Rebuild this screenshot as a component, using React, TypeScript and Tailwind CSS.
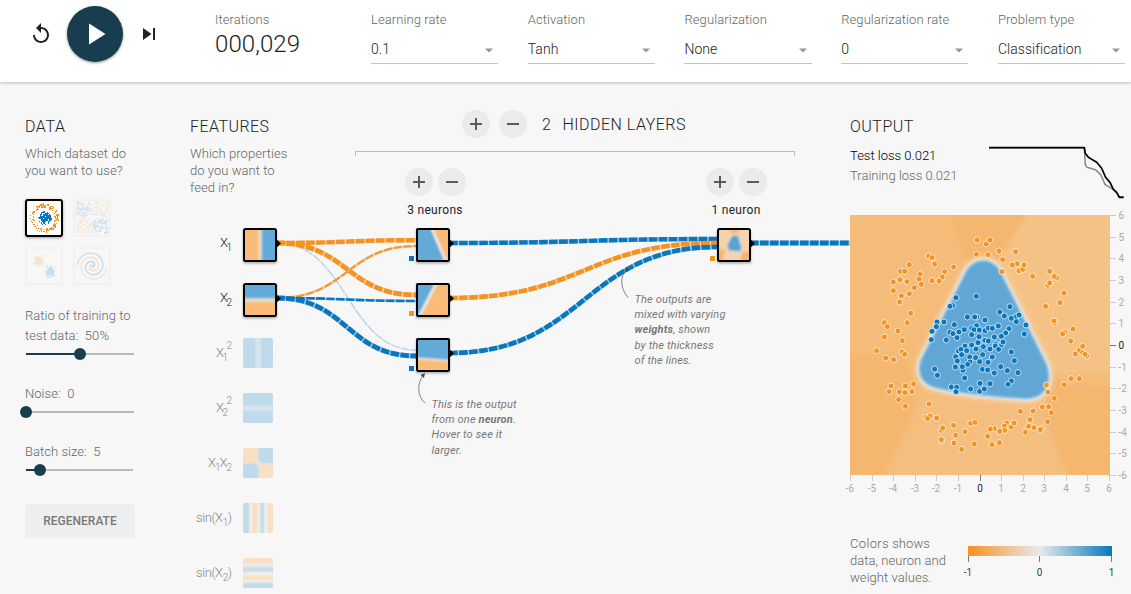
import React from "react";

const BLUE = "#0877bd";
const ORANGE = "#f59322";

/* ---------- header ---------- */

function Select({ label, value }: { label: string; value: string }) {
  return (
    <div className="flex flex-col">
      <span className="text-[13px] leading-[17px] font-light tracking-[0.08px] whitespace-nowrap text-[#666]">{label}</span>
      <div className="mt-[8px] flex h-[28px] items-center justify-between border-b border-[#c4c4c4] pr-[5px]">
        <span className="text-[14px] font-light tracking-[0.05px] text-[#222]">{value}</span>
        <svg width="8" height="5" viewBox="0 0 8 5" className="mt-px">
          <path d="M0 0.5h8L4 4.5z" fill="#999" />
        </svg>
      </div>
    </div>
  );
}

function Header() {
  return (
    <header className="relative z-10 flex h-[82px] items-start bg-white shadow-[0_1px_3px_rgba(0,0,0,0.24)]">
      <div className="flex h-[68px] items-center pl-[29px]">
        <svg width="24" height="24" viewBox="0 0 24 24" fill="#222">
          <path d="M12 5V1L7 6l5 5V7c3.31 0 6 2.69 6 6s-2.69 6-6 6-6-2.69-6-6H4c0 4.42 3.58 8 8 8s8-3.58 8-8-3.58-8-8-8z" />
        </svg>
        <div className="ml-[14px] flex h-[56px] w-[56px] items-center justify-center rounded-full bg-[#183d4e] shadow-[0_1px_3px_rgba(0,0,0,0.4)]">
          <svg width="36" height="36" viewBox="0 0 24 24" fill="#fff">
            <path d="M8 5v14l11-7z" />
          </svg>
        </div>
        <svg width="24" height="24" viewBox="0 0 24 24" fill="#222" className="ml-[14px]">
          <path d="M6 18l8.5-6L6 6v12zM16 6v12h2V6h-2z" />
        </svg>
      </div>
      <div className="ml-[54px] flex w-[156px] flex-col pt-[11px]">
        <span className="text-[13px] leading-[17px] font-light tracking-[0.08px] text-[#666]">Iterations</span>
        <span className="mt-[2px] text-[24px] leading-[28px] font-light tracking-[0.1px] text-[#222]">000,029</span>
      </div>
      <div className="grid w-[754px] grid-cols-5 gap-[29.7px] pt-[11px]">
        <Select label="Learning rate" value="0.1" />
        <Select label="Activation" value="Tanh" />
        <Select label="Regularization" value="None" />
        <Select label="Regularization rate" value="0" />
        <Select label="Problem type" value="Classification" />
      </div>
    </header>
  );
}

/* ---------- data column ---------- */

function makeRandom(seed: number) {
  let s = seed;
  return () => {
    s = (s * 16807) % 2147483647;
    return s / 2147483647;
  };
}

type Dot = { x: number; y: number; c: string };

function circleDots(): Dot[] {
  const r = makeRandom(77);
  const out: Dot[] = [];
  for (let i = 0; i < 110; i++) {
    const a = r() * Math.PI * 2;
    const d = 10.5 + r() * 3.8;
    out.push({ x: 17.5 + Math.cos(a) * d, y: 17 + Math.sin(a) * d, c: ORANGE });
  }
  for (let i = 0; i < 150; i++) {
    const a = r() * Math.PI * 2;
    const d = r() * 6.6;
    out.push({ x: 18.2 + Math.cos(a) * d, y: 17.3 + Math.sin(a) * d, c: BLUE });
  }
  return out;
}

function xorDots(): Dot[] {
  const r = makeRandom(991);
  const out: Dot[] = [];
  for (let i = 0; i < 270; i++) {
    const x = r() * 30 - 15;
    const y = r() * 30 - 15;
    out.push({ x: 17 + x + Math.sign(x) * 0.8, y: 17 + y + Math.sign(y) * 0.8, c: x * y < 0 ? ORANGE : BLUE });
  }
  return out.map((d) => ({ ...d, y: d.y }));
}

function gaussDots(): Dot[] {
  const r = makeRandom(4242);
  const out: Dot[] = [];
  const g = () => (r() + r() + r() - 1.5) * 4.6;
  for (let i = 0; i < 100; i++) {
    out.push({ x: 11.7 + g(), y: 11.8 + g(), c: ORANGE });
    out.push({ x: 23.3 + g(), y: 23 + g(), c: BLUE });
  }
  return out;
}

function spiralDots(): Dot[] {
  const out: Dot[] = [];
  for (let i = 0; i < 150; i++) {
    const d = (i / 150) * 15;
    const t = (1.75 * i * 2 * Math.PI) / 150;
    out.push({ x: 17 + d * Math.sin(t), y: 17 + d * Math.cos(t), c: BLUE });
    out.push({ x: 17 + d * Math.sin(t + Math.PI), y: 17 + d * Math.cos(t + Math.PI), c: ORANGE });
  }
  return out;
}

function Thumb({ dots, active }: { dots: Dot[]; active?: boolean }) {
  return (
    <div
      className={
        active
          ? "h-[38px] w-[38px] rounded-[3px] border-2 border-black bg-white shadow-[0_1px_3px_rgba(0,0,0,0.35)]"
          : "h-[38px] w-[38px] rounded-[3px] border-2 border-[#f1f1f1]"
      }
    >
      <svg width="34" height="34" viewBox="0 0 34 34" opacity={active ? 1 : 0.2} shapeRendering={active ? "crispEdges" : "auto"}>
        {dots.map((d, i) => (
          <rect key={i} x={d.x - 0.6} y={d.y - 0.6} width="1.25" height="1.25" fill={d.c} />
        ))}
      </svg>
    </div>
  );
}

function Slider({ value, width }: { value: number; width: string }) {
  return (
    <div className={`relative ml-px flex h-[12px] items-center ${width}`}>
      <div className="h-[2px] bg-[#183d4e]" style={{ width: `${value}%` }} />
      <div className="h-[2px] flex-1 bg-[#b8b8b8]" />
      <div className="absolute h-[12px] w-[12px] -translate-x-1/2 rounded-full bg-[#183d4e]" style={{ left: `${value}%` }} />
    </div>
  );
}

const circle = circleDots();
const xor = xorDots();
const gauss = gaussDots();
const spiral = spiralDots();

function DataColumn() {
  return (
    <section className="ml-[25px] w-[120px] shrink-0 pt-[34px]">
      <h2 className="text-[16px] leading-[21px] font-light tracking-[0.55px] text-[#222]">DATA</h2>
      <p className="mt-[8px] text-[13px] leading-[17px] font-light tracking-[0.12px] whitespace-nowrap text-[#666]">
        Which dataset do
        <br />
        you want to use?
      </p>
      <div className="mt-[20px] grid w-[86px] grid-cols-2 gap-[10px]">
        <Thumb dots={circle} active />
        <Thumb dots={xor} />
        <Thumb dots={gauss} />
        <Thumb dots={spiral} />
      </div>
      <div className="mt-[21px] text-[13px] leading-[20px] font-light tracking-[0.05px] whitespace-nowrap text-[#666]">
        <p>
          Ratio of training to
          <br />
          test data:&nbsp; 50%
        </p>
        <div className="mt-[2px]">
          <Slider value={50} width="w-[108px]" />
        </div>
        <p className="mt-[24px]">Noise:&nbsp; 0</p>
        <div className="mt-[2px]">
          <Slider value={0} width="w-[108px]" />
        </div>
        <p className="mt-[24px]">Batch size:&nbsp; 5</p>
        <div className="mt-[2px]">
          <Slider value={13} width="w-[107px]" />
        </div>
      </div>
      <button className="mt-[28px] flex h-[34px] w-[110px] items-center justify-center rounded-[3px] bg-[#eeeeee] text-[12px] font-medium text-[#777]">
        REGENERATE
      </button>
    </section>
  );
}

/* ---------- network ---------- */

function RoundButton({ kind }: { kind: "add" | "remove" }) {
  return (
    <div className="flex h-[28px] w-[28px] items-center justify-center rounded-full bg-[#ebebeb]">
      <svg width="12" height="12" viewBox="0 0 12 12" fill="#5c5c5c" shapeRendering="crispEdges">
        <rect x="0" y="5" width="12" height="2" />
        {kind === "add" && <rect x="5" y="0" width="2" height="12" />}
      </svg>
    </div>
  );
}

function NeuronControls({ label }: { label: string }) {
  return (
    <div className="flex w-[80px] flex-col items-center">
      <div className="flex gap-[5px]">
        <RoundButton kind="add" />
        <RoundButton kind="remove" />
      </div>
      <span className="mt-[6px] text-[12px] leading-[16px] tracking-[0.3px] text-[#222]">{label}</span>
    </div>
  );
}

const LINKS = [
  { d: "M277 243C347 243 347 350 416 350", c: "#b5d3e6", w: 1.3 },
  { d: "M277 243C347 243 347 240.2 416 240.2", c: ORANGE, w: 4.4 },
  { d: "M277 243C347 243 347 295 416 295", c: ORANGE, w: 4.8 },
  { d: "M277 298C347 298 347 246 416 246", c: "#f39a38", w: 2.3 },
  { d: "M277 298C347 298 347 301 416 301", c: BLUE, w: 2.6 },
  { d: "M277 298C347 298 347 356 416 356", c: BLUE, w: 4.8 },
  { d: "M450 243C584 243 584 239 717 239", c: BLUE, w: 4.4 },
  { d: "M450 298C584 298 584 243 717 243", c: ORANGE, w: 4.6 },
  { d: "M450 353C584 353 584 247 717 247", c: BLUE, w: 4.6 },
  { d: "M751 243H850", c: BLUE, w: 4.8 },
];

function Node({ x, y, fill, children }: { x: number; y: number; fill: string; children?: React.ReactNode }) {
  return (
    <g>
      <path d={`M${x + 33} ${y + 10}l5 4.5-5 4.5z`} fill="#000" />
      <g filter="url(#nodeShadow)">
        <rect x={x + 1} y={y} width="32" height="32" fill={fill} />
        {children}
        <rect x={x + 1} y={y} width="32" height="32" rx="1.5" fill="none" stroke="#000" strokeWidth="2" />
      </g>
    </g>
  );
}

function Grad({ id, stops, x1 = 0, y1 = 0, x2 = 1, y2 = 0 }: { id: string; stops: [number, string][]; x1?: number; y1?: number; x2?: number; y2?: number }) {
  return (
    <linearGradient id={id} x1={x1} y1={y1} x2={x2} y2={y2}>
      {stops.map(([o, c], i) => (
        <stop key={i} offset={o} stopColor={c} />
      ))}
    </linearGradient>
  );
}

const O = "#f9bb77";
const B = "#64aad8";
const LO = "#f9e0c5";
const LB = "#bfdaea";
const LW = "#f0f0ec";

function NetworkCanvas() {
  return (
    <svg className="absolute inset-0" width="660" height="512" viewBox="190 82 660 512" fontFamily="Roboto, sans-serif">
      <defs>
        <filter id="nodeShadow" x="-20%" y="-20%" width="140%" height="150%">
          <feDropShadow dx="0" dy="1.5" stdDeviation="1.3" floodOpacity="0.3" />
        </filter>
        <filter id="soft" x="-20%" y="-20%" width="140%" height="140%">
          <feGaussianBlur stdDeviation="1" />
        </filter>
        <Grad id="gx1" stops={[[0, O], [0.4, O], [0.5, "#e6dccf"], [0.62, B], [1, B]]} />
        <Grad id="gx2" y2={1} x2={0} stops={[[0, B], [0.38, B], [0.5, "#e6dccf"], [0.62, O], [1, O]]} />
        <Grad id="gx1s" stops={[[0, LB], [0.38, LB], [0.44, "#d6e4ee"], [0.57, "#d6e4ee"], [0.63, LB], [1, LB]]} />
        <Grad id="gx2s" x2={0} y2={1} stops={[[0, LB], [0.38, LB], [0.44, "#d6e4ee"], [0.57, "#d6e4ee"], [0.63, LB], [1, LB]]} />
        <Grad id="gs1" stops={[[0, "#c3dcea"], [0.16, LB], [0.25, LW], [0.35, LO], [0.43, LO], [0.53, LW], [0.65, LB], [0.75, LW], [0.85, LO], [1, LO]]} />
        <Grad id="gs2" x2={0} y2={1} stops={[[0, LO], [0.14, LO], [0.24, LW], [0.38, LB], [0.52, LW], [0.62, LO], [0.7, LO], [0.78, LW], [0.87, LB], [1, "#c3dcea"]]} />
        <clipPath id="n1"><rect x="416" y="228" width="34" height="34" /></clipPath>
        <clipPath id="n2"><rect x="416" y="283" width="34" height="34" /></clipPath>
        <clipPath id="n3"><rect x="416" y="338" width="34" height="34" /></clipPath>
        <clipPath id="n4"><rect x="717" y="228" width="34" height="34" /></clipPath>
      </defs>

      {/* layer bracket */}
      <path d="M355.5 156V151.5H794.5V156" fill="none" stroke="#bbb" />

      {LINKS.map((l, i) => (
        <g key={i} fill="none" stroke={l.c} strokeWidth={l.w}>
          <path d={l.d} opacity="0.35" />
          <path d={l.d} strokeDasharray="8.6 1.4" strokeDashoffset="1" />
        </g>
      ))}

      {/* biases */}
      <rect x="409" y="256" width="5" height="5" fill={BLUE} />
      <rect x="409" y="311" width="5" height="5" fill={ORANGE} />
      <rect x="409" y="366" width="5" height="5" fill={BLUE} />
      <rect x="710" y="256" width="5" height="5" fill={ORANGE} />

      <Node x={243} y={229} fill="url(#gx1)" />
      <Node x={243} y={284} fill="url(#gx2)" />
      <Node x={416} y={229} fill={O}>
        <g clipPath="url(#n1)">
          <path d="M410 222H429L448 266H410z" fill={B} stroke="#f4f0ea" strokeWidth="2.5" filter="url(#soft)" />
        </g>
      </Node>
      <Node x={416} y={284} fill={O}>
        <g clipPath="url(#n2)">
          <path d="M408 276H440L416 323H400z" fill={B} stroke="#f4f0ea" strokeWidth="2.5" filter="url(#soft)" />
        </g>
      </Node>
      <Node x={416} y={339} fill={O}>
        <g clipPath="url(#n3)">
          <path d="M410 330H456V361.5L410 358z" fill={B} stroke="#f4e6d6" strokeWidth="2" filter="url(#soft)" />
        </g>
      </Node>
      <Node x={717} y={229} fill="#f5d3ae">
        <g clipPath="url(#n4)" filter="url(#soft)">
          <path d="M730 227h9l-1 6h-7zM718 248l7 3-3 10h-5zM751 251l-8 1-3 6 4 5h8z" fill="#f8b570" />
          <path d="M732.500 235.500l-5 9 1 6 12 1 1-3.500-3.500-12.500z" fill="#58a3d3" stroke="#cfd9dc" strokeWidth="0.8" />
        </g>
      </Node>

      {/* inactive features */}
      <rect x="243" y="338" width="30" height="30" rx="2" fill="url(#gx1s)" />
      <rect x="243" y="393" width="30" height="30" rx="2" fill="url(#gx2s)" />
      <g>
        <rect x="243" y="448" width="30" height="30" rx="2" fill={LO} />
        <path d="M258.500 448H271a2 2 0 0 1 2 2V463H258.500zM243 463.500H258.500V478H245a2 2 0 0 1-2-2z" fill={LB} />
        <circle cx="258.300" cy="463.300" r="2.800" fill="#e4e8e8" filter="url(#soft)" />
      </g>
      <rect x="243" y="503" width="30" height="30" rx="2" fill="url(#gs1)" />
      <rect x="243" y="558" width="30" height="30" rx="2" fill="url(#gs2)" />

      <g fontSize="13" fontWeight="300" fill="#222" textAnchor="end">
        <text x="232" y="246.500" textLength="12">X<tspan fontSize="10" dy="4.500">1</tspan></text>
        <text x="232" y="301.500" textLength="12">X<tspan fontSize="10" dy="4.500">2</tspan></text>
        <g fill="#888">
          <text x="232" y="356.500" textLength="16">X<tspan fontSize="10" dy="4.500">1</tspan><tspan fontSize="10" dy="-12">2</tspan></text>
          <text x="232" y="411.500" textLength="16">X<tspan fontSize="10" dy="4.500">2</tspan><tspan fontSize="10" dy="-12">2</tspan></text>
          <text x="232" y="466.500" textLength="24">X<tspan fontSize="10" dy="4.500">1</tspan><tspan dy="-4.500">X</tspan><tspan fontSize="10" dy="4.500">2</tspan></text>
          <text x="232" y="521.500" textLength="36">sin(X<tspan fontSize="10" dy="4.500">1</tspan><tspan dy="-4.500">)</tspan></text>
          <text x="232" y="576.500" textLength="36">sin(X<tspan fontSize="10" dy="4.500">2</tspan><tspan dy="-4.500">)</tspan></text>
        </g>
      </g>

      {/* callout leaders */}
      <g fill="none" stroke="#777" strokeWidth="0.9">
        <path d="M628 297.500C620 288 620 277 626 270" />
        <path d="M425 403C417 396 417 384 423 375" />
      </g>
      <path d="M628.500 268l-1.500 4.500-3-2.500zM425 373l-1 5-3.500-3z" fill="#444" />
    </svg>
  );
}

function Network() {
  return (
    <section className="relative ml-[45px] h-[512px] w-[660px] shrink-0">
      <NetworkCanvas />
      <div className="flex">
        <div className="w-[165px] pt-[34px]">
          <h2 className="text-[16px] leading-[21px] font-light tracking-[0.45px] text-[#222]">FEATURES</h2>
          <p className="mt-[8px] text-[13px] leading-[17px] font-light tracking-[0.05px] whitespace-nowrap text-[#666]">
            Which properties
            <br />
            do you want to
            <br />
            feed in?
          </p>
        </div>
        <div className="w-[440px] pt-[28px]">
          <div className="flex h-[28px] items-center pl-[107px] text-[16px] font-light tracking-[0.5px] text-[#222]">
            <RoundButton kind="add" />
            <div className="ml-[9px]">
              <RoundButton kind="remove" />
            </div>
            <span className="ml-[15px] pt-px">2</span>
            <span className="ml-[11px] pt-px whitespace-nowrap">HIDDEN LAYERS</span>
          </div>
          <div className="mt-[30px] flex justify-between pr-[19px] pl-[40px]">
            <NeuronControls label="3 neurons" />
            <NeuronControls label="1 neuron" />
          </div>
        </div>
      </div>
      <p className="absolute top-[210px] left-[444.5px] text-[11px] leading-[15.2px] tracking-[0.15px] whitespace-nowrap text-[#777] italic">
        The outputs are
        <br />
        mixed with varying
        <br />
        <b>weights</b>, shown
        <br />
        by the thickness
        <br />
        of the lines.
      </p>
      <p className="absolute top-[315px] left-[241.5px] text-[11px] leading-[15.2px] tracking-[0.15px] whitespace-nowrap text-[#777] italic">
        This is the output
        <br />
        from one <b>neuron</b>.
        <br />
        Hover to see it
        <br />
        larger.
      </p>
    </section>
  );
}

/* ---------- output ---------- */

const ORANGE_LEFT =
  "381,90 409,102 379,133 414,134 236,138 246,143 254,162 178,164 311,171 152,184 164,184 284,185 210,193 277,201 207,207 150,209 130,216 171,215 214,223 246,212 267,213 193,233 130,242 178,251 154,258 149,276 182,310 103,338 112,350 172,338 144,363 103,381 157,392 80,422 107,444 131,449 156,426 164,433 123,528 117,545 166,528 191,522 148,546 165,548 186,545 146,569 166,589 237,582 228,622 240,618 233,626 260,624 274,661 278,654 311,646 317,676 345,665 362,640 375,637 275,693 274,689 312,699 335,718 373,702 413,679";
const BLUE_LEFT =
  "318,263 379,259 308,287 300,289 352,321 380,321 374,321 261,336 282,336 313,344 259,350 246,364 405,330 300,367 309,371 327,366 343,359 321,383 289,390 244,389 365,355 380,347 372,359 365,374 388,360 405,362 387,380 405,391 384,398 400,410 345,408 365,405 325,423 333,418 350,422 378,417 335,434 317,440 359,441 377,443 398,434 322,453 389,455 360,456 353,463 316,471 339,481 337,470 397,478 254,477 262,496 344,504 304,531 320,532 318,545 362,537 390,520 389,544 403,537";
const ORANGE_RIGHT =
  "15,90 42,123 92,125 53,149 51,185 96,161 82,165 102,182 113,178 117,165 143,199 194,184 215,203 208,199 189,226 194,219 237,249 225,278 182,289 209,339 207,333 264,357 239,367 233,372 257,393 283,421 293,409 271,432 293,428 305,438 300,433 184,525 238,524 258,506 283,506 189,546 208,565 172,591 191,590 199,608 106,604 144,603 135,629 188,635 65,639 58,648 78,651 87,639 28,656 16,657 59,661 44,664 131,649 147,653 170,656 166,659 121,667 43,698 21,704";
const BLUE_RIGHT =
  "75,290 44,306 58,318 93,320 79,325 102,315 94,335 123,345 118,372 10,354 22,355 40,348 72,356 62,369 28,381 49,379 10,393 32,402 50,404 54,396 31,408 15,417 41,418 22,441 79,426 9,457 88,452 8,480 47,470 28,489 67,482 99,488 15,521 79,513 69,523";

function Points({ data, dx, fill }: { data: string; dx: number; fill: string }) {
  return (
    <g fill={fill} stroke="#fff" strokeOpacity="0.75" strokeWidth="2.8">
      {data.split(" ").map((p, i) => {
        const [x, y] = p.split(",").map(Number);
        return <circle key={i} cx={x + dx} cy={y} r="9" />;
      })}
    </g>
  );
}

function Heatmap() {
  const tri =
    "M352 178C376 144 424 142 448 180L589 462C606 512 594 562 532 566C440 562 320 549 252 532C216 520 200 492 213 450z";
  return (
    <svg width="260" height="260" viewBox="0 15 780 780" className="block">
      <defs>
        <filter id="b1"><feGaussianBlur stdDeviation="5" /></filter>
        <filter id="b2"><feGaussianBlur stdDeviation="8" /></filter>
        <filter id="b3"><feGaussianBlur stdDeviation="4" /></filter>
      </defs>
      <rect y="15" width="780" height="780" fill="#f4bb79" />
      <g filter="url(#b3)">
        <path d="M295 -10H545L460 150H345z" fill="#f5b66f" />
        <path d="M545 -10H810V500L610 500L445 150z" fill="#f4c285" />
        <path d="M-20 430L150 440L205 530L180 640L90 820H-20z" fill="#f5b66f" />
        <path d="M220 560L90 820H665L585 620L600 570z" fill="#f4be7f" />
        <path d="M610 505L810 495V820H665L580 620z" fill="#f5b66f" />
        <path d="M600 490L810 488V530L640 522z" fill="#f5bc79" />
      </g>
      <path d={tri} fill="#f3d4ae" stroke="#f3d4ae" strokeWidth="26" filter="url(#b2)" />
      <path d={tri} fill="#f4f3f1" stroke="#f4f3f1" strokeWidth="12" filter="url(#b1)" />
      <path d={tri} fill="#61a7d6" stroke="#61a7d6" strokeWidth="2" filter="url(#b1)" />
      <Points data={ORANGE_LEFT} dx={0} fill={ORANGE} />
      <Points data={ORANGE_RIGHT} dx={405} fill={ORANGE} />
      <Points data={BLUE_LEFT} dx={0} fill={BLUE} />
      <Points data={BLUE_RIGHT} dx={405} fill={BLUE} />
    </svg>
  );
}

const TICKS = [-6, -5, -4, -3, -2, -1, 0, 1, 2, 3, 4, 5, 6];

function XAxis() {
  return (
    <svg width="270" height="22" viewBox="-5 0 270 22" className="-ml-[5px] block overflow-visible" fontSize="10" fontFamily="Roboto, sans-serif" textAnchor="middle">
      {TICKS.map((t) => {
        const x = Math.round(((t + 6) * 259) / 12) + 0.5;
        return (
          <g key={t}>
            <path d={`M${x} 0v6`} stroke={t === 0 ? "#777" : "#ccc"} />
            <text x={x - 0.5} y="16.500" fill={t === 0 ? "#222" : "#aaa"}>{t}</text>
          </g>
        );
      })}
    </svg>
  );
}

function YAxis() {
  return (
    <svg width="21" height="260" viewBox="0 0 21 260" className="block overflow-visible" fontSize="10" fontFamily="Roboto, sans-serif">
      {TICKS.map((t) => {
        const y = Math.round(((6 - t) * 260) / 12) + 0.5;
        return (
          <g key={t}>
            <path d={`M0 ${y}h6`} stroke={t === 0 ? "#777" : "#ccc"} />
            <text x="8.500" y={y + 3} fill={t === 0 ? "#222" : "#aaa"}>{t}</text>
          </g>
        );
      })}
    </svg>
  );
}

function Output() {
  return (
    <section className="w-[281px] shrink-0 pt-[34px]">
      <h2 className="text-[16px] leading-[21px] font-light tracking-[0.5px] text-[#222]">OUTPUT</h2>
      <div className="mt-[9px] flex h-[69px]">
        <div className="w-[139px] text-[13px] leading-[20px] font-light whitespace-nowrap">
          <p className="text-black">Test loss 0.021</p>
          <p className="text-[#666]">Training loss 0.021</p>
        </div>
        <svg width="137" height="57" viewBox="447 138 411 171" fill="none" strokeLinejoin="round">
          <path d="M447 143H733L736 195L741 202L766 209L782 224L795 253L806 260L820 268L832 281L838 291L851 290" stroke="#888" strokeWidth="4.500" />
          <path d="M447 143H733L736 160L745 172L770 187L785 205L797 232L810 247L820 268L830 277L838 292L851 292" stroke="#000" strokeWidth="5" />
        </svg>
      </div>
      <div className="flex">
        <Heatmap />
        <YAxis />
      </div>
      <XAxis />
      <div className="mt-[38px] flex">
        <p className="w-[113px] text-[13px] leading-[17px] font-light tracking-[0.05px] whitespace-nowrap text-[#666]">
          <span className="tracking-[0.35px]">Colors</span> shows
          <br />
          data, neuron and
          <br />
          weight values.
        </p>
        <svg width="155" height="45" viewBox="-5 0 155 45" className="mt-[11px]" fontSize="10" fontFamily="Roboto, sans-serif" textAnchor="middle" fill="#444">
          <defs>
            <Grad id="legend" stops={[[0, ORANGE], [0.5, "#e8eaeb"], [1, BLUE]]} />
          </defs>
          <rect x="0" y="0" width="144" height="10" fill="url(#legend)" />
          <path d="M0.500 10v6M71.500 10v6M143.500 10v6" stroke="#777" />
          <text x="0" y="29.500">-1</text>
          <text x="71.500" y="29.500">0</text>
          <text x="143.500" y="29.500">1</text>
        </svg>
      </div>
    </section>
  );
}

export default function App() {
  return (
    <div className="h-[594px] w-[1131px] overflow-hidden bg-[#f7f7f7] font-[Roboto,sans-serif]">
      <Header />
      <main className="flex">
        <DataColumn />
        <Network />
        <Output />
      </main>
    </div>
  );
}
